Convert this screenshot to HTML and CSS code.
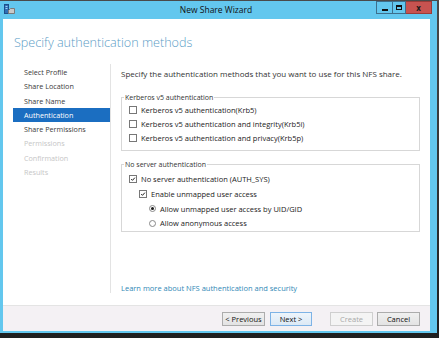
FILE: index.html
```html
<!DOCTYPE html>
<html lang="en">
<head>
    <meta charset="UTF-8">
    <title>New Share Wizard</title>
    <link rel="stylesheet" href="styles.css">
</head>
<body>
    <div class="window">
        <!-- Title bar -->
        <div class="titlebar">
            <svg class="app-icon" width="11" height="11" viewBox="0 0 11 11">
                <rect x="0.5" y="0.5" width="4" height="9" fill="#2f6fb5" stroke="#1d4f8a"/>
                <rect x="1.5" y="2" width="2" height="1" fill="#9fd0f5"/>
                <rect x="1.5" y="4" width="2" height="1" fill="#9fd0f5"/>
                <path d="M4.5 6.5 L6.5 4.5 H10.5 V9.5 H4.5 Z" fill="#c9c9c9" stroke="#7a7a7a"/>
            </svg>
            <span class="title">New Share Wizard</span>
            <div class="controls">
                <span class="ctl ctl-min"><i></i></span>
                <span class="ctl ctl-max"><i></i></span>
                <span class="ctl ctl-close">x</span>
            </div>
        </div>

        <div class="client">
            <h1>Specify authentication methods</h1>

            <div class="main">
                <ul class="steps">
                    <li>Select Profile</li>
                    <li>Share Location</li>
                    <li>Share Name</li>
                    <li class="active">Authentication</li>
                    <li>Share Permissions</li>
                    <li class="disabled">Permissions</li>
                    <li class="disabled">Confirmation</li>
                    <li class="disabled">Results</li>
                </ul>

                <div class="content">
                    <p class="intro">Specify the authentication methods that you want to use for this NFS share.</p>

                    <fieldset class="group group-krb">
                        <legend>Kerberos v5 authentication</legend>
                        <label class="row"><span class="check"></span>Kerberos v5 authentication(Krb5)</label>
                        <label class="row"><span class="check"></span>Kerberos v5 authentication and integrity(Krb5i)</label>
                        <label class="row"><span class="check"></span>Kerberos v5 authentication and privacy(Krb5p)</label>
                    </fieldset>

                    <fieldset class="group group-sys">
                        <legend>No server authentication</legend>
                        <label class="row"><span class="check checked"><svg viewBox="0 0 8 8"><path d="M1.6 4.1 L3.3 5.8 L6.5 2.2" /></svg></span>No server authentication (AUTH_SYS)</label>
                        <label class="row indent-1"><span class="check checked"><svg viewBox="0 0 8 8"><path d="M1.6 4.1 L3.3 5.8 L6.5 2.2" /></svg></span>Enable unmapped user access</label>
                        <label class="row indent-2"><span class="radio selected"></span>Allow unmapped user access by UID/GID</label>
                        <label class="row indent-2"><span class="radio"></span>Allow anonymous access</label>
                    </fieldset>

                    <a class="learn" href="#">Learn more about NFS authentication and security</a>
                </div>
            </div>

            <div class="footer">
                <button class="btn btn-prev">&lt; Previous</button>
                <button class="btn btn-next">Next &gt;</button>
                <button class="btn btn-create" disabled>Create</button>
                <button class="btn btn-cancel">Cancel</button>
            </div>
        </div>
    </div>
</body>
</html>
```

FILE: styles.css
```css
* {
    margin: 0;
    padding: 0;
    box-sizing: border-box;
}

body {
    width: 439px;
    height: 338px;
    overflow: hidden;
    background: linear-gradient(#4a4a4a, #1f1f1f);
    font-family: "Open Sans", "Noto Sans", sans-serif;
    color: #1e1e1e;
}

.window {
    margin-top: 1px;
    width: 437px;
    height: 332px;
    background-color: #63c7ee;
    display: flex;
    flex-direction: column;
    padding-bottom: 2px;
}

/* Title bar */
.titlebar {
    height: 18px;
    display: grid;
    grid-template-columns: 1fr auto 1fr;
    align-items: start;
}

.app-icon {
    margin: 3px 0 0 4px;
}

.title {
    font-size: 8.5px;
    line-height: 18px;
    padding-right: 5px;
    color: #111;
}

.controls {
    justify-self: end;
    display: flex;
    margin-right: 5px;
}

.ctl {
    height: 13px;
    display: flex;
    align-items: center;
    justify-content: center;
    border: 1px solid #3d6f8c;
}

.ctl-min {
    width: 16px;
    border-right: none;
}

.ctl-min i {
    display: block;
    width: 6px;
    height: 2px;
    margin-top: 4px;
    background: #111;
}

.ctl-max {
    width: 14px;
}

.ctl-max i {
    display: block;
    width: 6px;
    height: 5px;
    border: 1px solid #111;
    border-top-width: 2px;
}

.ctl-close {
    width: 26px;
    background: #c75350;
    border-color: #9a3b38;
    border-left: none;
    font-size: 8px;
    font-weight: bold;
    color: #1a1a1a;
    line-height: 1;
}

/* Client area */
.client {
    flex: 1;
    margin: 0 7px 0 3px;
    background: #fff;
    display: flex;
    flex-direction: column;
}

h1 {
    padding: 14px 0 0 11px;
    font-size: 12.6px;
    line-height: 20px;
    font-weight: 300;
    color: #5b9dc6;
}

.main {
    margin-top: 11px;
    height: 229px;
    display: flex;
}

.steps {
    list-style: none;
    width: 108px;
    border-right: 1px solid #e3e3e3;
    padding: 1px 0 0 10px;
}

.steps li {
    height: 14.3px;
    line-height: 14.3px;
    padding-left: 11px;
    font-size: 7.2px;
    color: #3a3a3a;
}

.steps li.active {
    background: #1b6ec1;
    color: #fff;
}

.steps li.disabled {
    color: #c6c6c6;
}

.content {
    flex: 1;
    padding: 3px 10px 0 10px;
    display: flex;
    flex-direction: column;
}

.intro {
    font-size: 8px;
    line-height: 14px;
    color: #333;
}

/* Group boxes */
.group {
    border: 1px solid #d7d7d7;
    padding: 0 0 5px 2px;
}

.group legend {
    padding: 0 1px;
    font-size: 7px;
    line-height: 11px;
    color: #333;
}

.group-krb {
    margin-top: 11px;
}

.group-sys {
    margin-top: 8px;
    padding-top: 2px;
    padding-bottom: 0;
}

.row {
    display: flex;
    align-items: center;
    height: 14px;
    padding-left: 5px;
    font-size: 7.5px;
    color: #222;
}

.group-sys .row {
    height: 14.7px;
}

.row.indent-1 {
    padding-left: 15px;
}

.row.indent-2 {
    padding-left: 25px;
}

.check {
    width: 8px;
    height: 8px;
    margin-right: 4px;
    border: 1px solid #777;
    background: #fff;
    display: flex;
}

.check svg {
    width: 100%;
    height: 100%;
    fill: none;
    stroke: #1a1a1a;
    stroke-width: 1.3;
}

.radio {
    width: 7px;
    height: 7px;
    margin-right: 4px;
    border: 1px solid #888;
    border-radius: 50%;
    background: #fff;
    display: flex;
    align-items: center;
    justify-content: center;
}

.radio.selected::after {
    content: "";
    width: 3px;
    height: 3px;
    border-radius: 50%;
    background: #1a1a1a;
}

.learn {
    margin-top: auto;
    font-size: 7.5px;
    line-height: 10px;
    color: #3189b6;
    text-decoration: none;
}

/* Footer buttons */
.footer {
    height: 26px;
    margin-top: 12px;
    border-top: 1px solid #e4e4e4;
    background: #f4f1f4;
    display: flex;
    justify-content: flex-end;
    align-items: flex-start;
    padding: 6px 10px 0 0;
}

.btn {
    width: 43px;
    height: 14px;
    border: 1px solid #acacac;
    background: linear-gradient(#f0f0f0, #e3e3e3);
    font-family: inherit;
    font-size: 7.5px;
    color: #111;
}

.btn-next {
    width: 42px;
    margin-left: 5px;
    border-color: #7db3e6;
    background: linear-gradient(#eef5fb, #dce9f5);
}

.btn-create {
    margin-left: 18px;
    border-color: #cfcfcf;
    background: #f4f4f4;
    color: #a9a9a9;
}

.btn-cancel {
    margin-left: 4px;
}
```
